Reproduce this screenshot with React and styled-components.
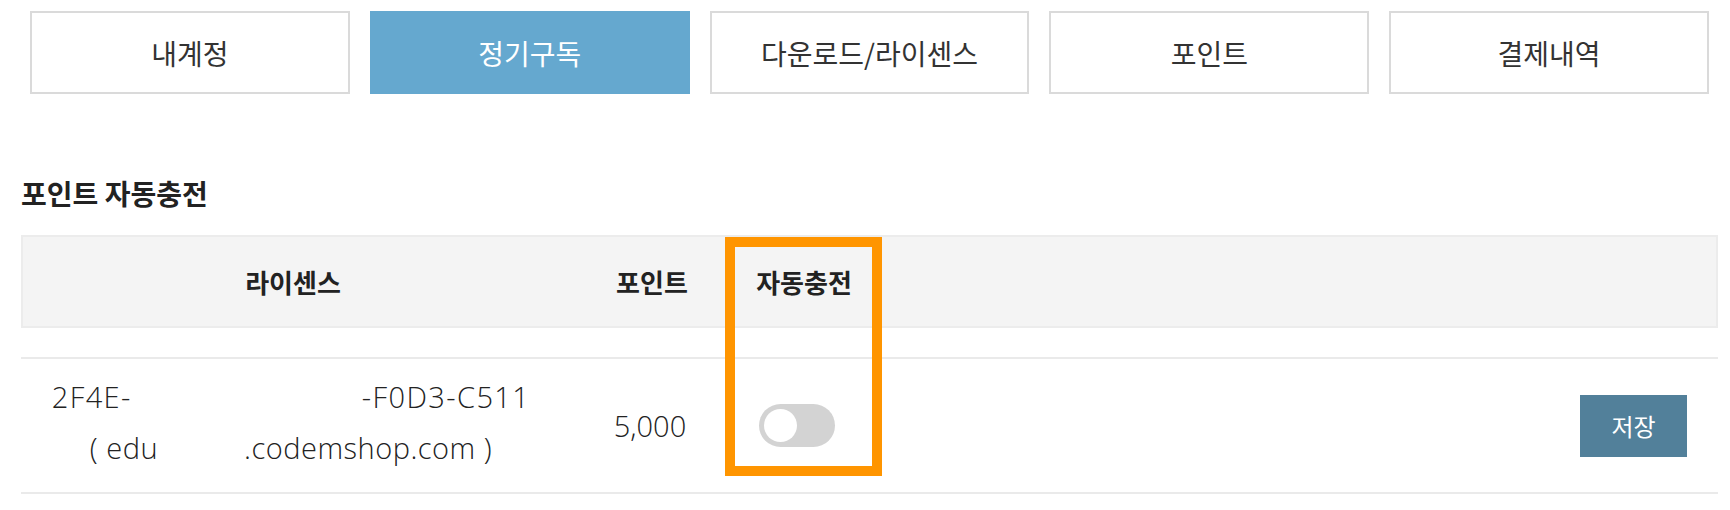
import React, { useState } from 'react';
import styled, { createGlobalStyle } from 'styled-components';

const GlobalStyle = createGlobalStyle`
  body {
    margin: 0;
    background: #fff;
    font-family: "Noto Sans CJK KR", "Noto Sans", sans-serif;
    color: #222;
  }
`;

const Page = styled.div`
  padding: 11px 12px 0 21px;
`;

const Tabs = styled.nav`
  display: grid;
  grid-template-columns: repeat(5, 1fr);
  gap: 20px;
  margin: 0 9px;
`;

const Tab = styled.div`
  height: 83px;
  box-sizing: border-box;
  display: flex;
  align-items: center;
  justify-content: center;
  font-size: 28px;
  font-weight: 400;
  cursor: pointer;
  color: ${({ active }) => (active ? '#fff' : '#333')};
  background: ${({ active }) => (active ? '#65a8cf' : '#fff')};
  border: ${({ active }) => (active ? 'none' : '2px solid #dadada')};
`;

const Title = styled.h2`
  margin: 79px 0 22px;
  font-size: 28px;
  line-height: 40px;
  font-weight: 700;
  color: #222;
`;

const Table = styled.div`
  position: relative;
`;

const cols = '540px 178px 126px 1fr';

const HeadRow = styled.div`
  display: grid;
  grid-template-columns: ${cols};
  height: 93px;
  box-sizing: border-box;
  background: #f4f4f4;
  border: 2px solid #ececec;
`;

const HeadCell = styled.div`
  display: flex;
  align-items: center;
  justify-content: center;
  font-size: 26px;
  font-weight: 700;
  color: #222;
`;

const BodyRow = styled.div`
  display: grid;
  grid-template-columns: ${cols};
  height: 137px;
  box-sizing: border-box;
  margin-top: 29px;
  border-top: 2px solid #eaeaea;
  border-bottom: 2px solid #eaeaea;
`;

const Cell = styled.div`
  display: flex;
  align-items: center;
  justify-content: ${({ align }) => align || 'center'};
  padding-right: ${({ pr }) => pr || 0}px;
  padding-bottom: ${({ pb }) => pb || 0}px;
  font-family: "Open Sans", "Noto Sans CJK KR", sans-serif;
  font-weight: 300;
  font-size: 29px;
  color: #222;
`;

const License = styled.div`
  text-align: center;
  line-height: 51px;
  letter-spacing: 0.5px;
`;

const KeyLine = styled.span`
  letter-spacing: 1.4px;
`;

const Masked = styled.span`
  display: inline-block;
  width: ${({ w }) => w}px;
`;

const Track = styled.button`
  display: flex;
  align-items: center;
  justify-content: ${({ on }) => (on ? 'flex-end' : 'flex-start')};
  width: 76px;
  height: 43px;
  padding: 0 5px;
  margin-right: 10px;
  border: none;
  border-radius: 22px;
  background: ${({ on }) => (on ? '#65a8cf' : '#d3d3d3')};
  cursor: pointer;
`;

const Knob = styled.span`
  width: 33px;
  height: 33px;
  border-radius: 50%;
  background: #fff;
`;

const SaveButton = styled.button`
  width: 107px;
  height: 62px;
  border: none;
  background: #52809a;
  color: #fff;
  font-family: "Noto Sans CJK KR", sans-serif;
  font-size: 24px;
  cursor: pointer;
`;

const Highlight = styled.div`
  position: absolute;
  left: 704px;
  top: 2px;
  width: 157px;
  height: 239px;
  box-sizing: border-box;
  border: 10px solid #ff9500;
  pointer-events: none;
`;

const tabs = ['내계정', '정기구독', '다운로드/라이센스', '포인트', '결제내역'];

const App = () => {
  const [auto, setAuto] = useState(false);
  return (
    <Page>
      <GlobalStyle />
      <Tabs>
        {tabs.map((t) => (
          <Tab key={t} active={t === '정기구독'}>
            {t}
          </Tab>
        ))}
      </Tabs>

      <Title>포인트 자동충전</Title>

      <Table>
        <HeadRow>
          <HeadCell>라이센스</HeadCell>
          <HeadCell>포인트</HeadCell>
          <HeadCell>자동충전</HeadCell>
          <HeadCell />
        </HeadRow>
        <BodyRow>
          <Cell pb={8}>
            <License>
              <KeyLine>
                2F4E-<Masked w={230} />-F0D3-C511
              </KeyLine>
              <br />( edu<Masked w={86} />.codemshop.com )
            </License>
          </Cell>
          <Cell>5,000</Cell>
          <Cell>
            <Track on={auto} onClick={() => setAuto(!auto)}>
              <Knob />
            </Track>
          </Cell>
          <Cell align="flex-end" pr={31}>
            <SaveButton>저장</SaveButton>
          </Cell>
        </BodyRow>
        <Highlight />
      </Table>
    </Page>
  );
};

export default App;
